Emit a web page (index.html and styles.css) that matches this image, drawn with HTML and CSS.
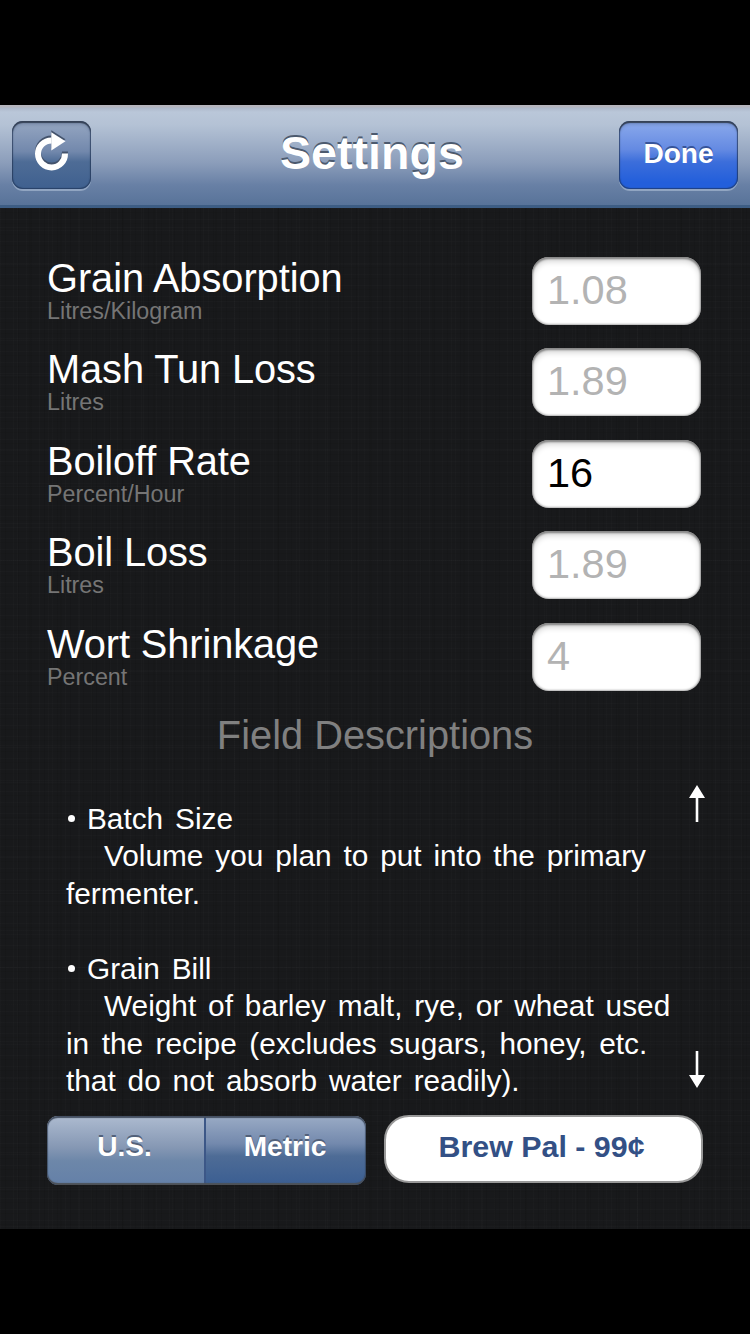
FILE: index.html
```html
<!DOCTYPE html>
<html lang="en">
<head>
<meta charset="utf-8">
<title>Settings</title>
<link rel="stylesheet" href="styles.css">
</head>
<body>
<div class="app">
  <header class="navbar">
    <button class="nav-button refresh" aria-label="Refresh">
      <svg class="refresh-icon" viewBox="0 0 36 44" width="36" height="44">
        <path d="M31 25.5A13.5 13.5 0 1 1 17.5 12.4" fill="none" stroke="currentColor" stroke-width="6"/>
        <path d="M17.3 4.2L31.5 13.2L17.3 22.6Z" fill="currentColor"/>
      </svg>
    </button>
    <h1 class="title">Settings</h1>
    <button class="nav-button done">Done</button>
  </header>
  <main class="content">
    <div class="fields">
      <div class="row"><label class="caption"><span class="name grain">Grain Absorption</span><span class="unit">Litres/Kilogram</span></label><input class="field" placeholder="1.08"></div>
      <div class="row"><label class="caption"><span class="name">Mash Tun Loss</span><span class="unit">Litres</span></label><input class="field" placeholder="1.89"></div>
      <div class="row"><label class="caption"><span class="name">Boiloff Rate</span><span class="unit">Percent/Hour</span></label><input class="field" value="16"></div>
      <div class="row"><label class="caption"><span class="name">Boil Loss</span><span class="unit">Litres</span></label><input class="field" placeholder="1.89"></div>
      <div class="row"><label class="caption"><span class="name">Wort Shrinkage</span><span class="unit">Percent</span></label><input class="field" placeholder="4"></div>
    </div>
    <h2 class="subtitle">Field Descriptions</h2>
    <section class="descriptions">
      <div class="text">
        <p class="term">Batch Size</p>
        <p class="body">Volume you plan to put into the primary</p>
        <p class="line">fermenter.</p>
        <p class="term second">Grain Bill</p>
        <p class="body">Weight of barley malt, rye, or wheat used</p>
        <p class="line wide">in the recipe (excludes sugars, honey, etc.</p>
        <p class="line">that do not absorb water readily).</p>
      </div>
      <div class="scroll-hints">
        <svg width="16" height="37" viewBox="0 0 16 37"><path d="M8 0L16 13H9.3V37H6.7V13H0Z" fill="currentColor"/></svg>
        <svg width="16" height="37" viewBox="0 0 16 37"><path d="M8 37L0 24H6.7V0H9.3V24H16Z" fill="currentColor"/></svg>
      </div>
    </section>
    <footer class="actions">
      <div class="segments"><button class="segment us">U.S.</button><button class="segment metric">Metric</button></div>
      <button class="purchase">Brew Pal - 99¢</button>
    </footer>
  </main>
</div>
</body>
</html>
```
FILE: styles.css
```css
* { box-sizing: border-box; }
body {
  margin: 0;
  background: #000;
  color: #fff;
  font-family: "Liberation Sans", Arial, sans-serif;
}
button, input { font-family: inherit; margin: 0; border: 0; }
h1, h2, p { margin: 0; font-weight: normal; }
.app { width: 750px; height: 1334px; padding: 105px 0; display: flex; flex-direction: column; overflow: hidden; }

.navbar {
  height: 103px;
  flex: none;
  display: flex;
  align-items: flex-start;
  justify-content: space-between;
  padding: 16px 12px 0;
  border-bottom: 3px solid #3d5d84;
  background: linear-gradient(#b5b5bd 0, #b5b5bd 2px, #adb9ca 3px, #bac7d9 7px, #b4c2d5 20px, #8b9dba 58px, #6880a5 80px, #587399 100px);
}
.nav-button {
  height: 68px;
  padding: 0;
  display: flex;
  justify-content: center;
  border-radius: 11px;
  color: #fff;
  box-shadow: inset 0 2px 1px #364257, inset 0 0 1px 1px rgba(28,47,82,.65), inset 0 4px 3px rgba(40,60,95,.2), 0 2px 0 rgba(190,205,225,.5);
}
.refresh { width: 79px; background: linear-gradient(#96a7c2, #7288ac 45%, #4e6c96 60%, #3f608f); }
.refresh-icon { margin-top: 7px; filter: drop-shadow(0 -2px 0 #43526b); }
.title {
  width: 184px;
  margin: -2px 0 0 34px;
  font-size: 46.6px;
  line-height: 68px;
  font-weight: bold;
  text-shadow: 0 -2px 0 #4c5a6e;
}
.done {
  width: 119px;
  font-size: 28.1px;
  line-height: 66px;
  font-weight: bold;
  text-shadow: 0 -2px 0 #36549a;
  background: linear-gradient(#8caaec, #648ae2 42%, #3c6edb 60%, #235fdb 90%);
}

.content {
  height: 1021px;
  padding: 49px 47px 0;
  background:
    repeating-linear-gradient(90deg, rgba(255,255,255,.01) 0 1px, transparent 1px 5px, rgba(0,0,0,.07) 5px 6px, transparent 6px 13px),
    repeating-linear-gradient(90deg, transparent 0 17px, rgba(255,255,255,.01) 17px 18px, transparent 18px 29px, rgba(0,0,0,.06) 29px 31px),
    repeating-linear-gradient(rgba(255,255,255,.01) 0 1px, transparent 1px 4px, rgba(0,0,0,.06) 4px 5px, transparent 5px 11px),
    repeating-linear-gradient(transparent 0 19px, rgba(255,255,255,.01) 19px 20px, transparent 20px 37px),
    #18191b;
}
.row { height: 91.4px; display: flex; justify-content: space-between; padding-right: 2px; }
.caption { display: flex; flex-direction: column; margin-top: -1px; white-space: nowrap; }
.name { font-size: 39.8px; line-height: 44px; letter-spacing: -.1px; }
.grain { letter-spacing: -.05px; }
.unit { color: #757575; font-size: 23.3px; line-height: 22px; }
.field {
  width: 169px;
  height: 68px;
  padding: 0 14px 2px 15px;
  border-radius: 17px;
  background: #fff;
  color: #000;
  font-size: 41.5px;
  box-shadow: inset 0 2px 2px #888, inset 0 4px 6px rgba(0,0,0,.2), inset 0 0 2px 1px rgba(0,0,0,.3);
}
.field::placeholder { color: #b3b3b3; opacity: 1; }
.subtitle { height: 46px; text-align: center; color: #808080; font-size: 39.8px; line-height: 43px; }

.descriptions { height: 336px; padding: 40px 2px 0 19px; display: flex; justify-content: space-between; }
.text { font-size: 29.8px; line-height: 37.5px; word-spacing: 3.6px; white-space: nowrap; }
.term { display: flex; align-items: center; gap: 12px; padding-left: 2px; }
.term::before { content: ""; width: 7px; height: 7px; border-radius: 50%; background: #fff; }
.second { margin-top: 37.5px; }
.body { padding-left: 38px; }
.wide { word-spacing: 4.2px; }
.scroll-hints { margin: -15px -4px 0 0; height: 303px; display: flex; flex-direction: column; justify-content: space-between; }

.actions { margin-top: 20px; display: flex; gap: 18px; }
.segments {
  position: relative;
  width: 319px;
  height: 69px;
  display: flex;
  border-radius: 11px;
  overflow: hidden;
}
.segments::after {
  content: "";
  position: absolute;
  inset: 0;
  border-radius: 11px;
  pointer-events: none;
  box-shadow: inset 0 2px 1px #455062, inset 0 -2px 1px #4d5157, inset 0 0 1px 1px rgba(40,55,80,.6);
}
.segment { height: 69px; padding: 0 0 7px; color: #fff; font-size: 28.1px; font-weight: bold; text-shadow: 0 -2px 0 #52617a; }
.us { width: 157px; padding-right: 2px; background: linear-gradient(#adbbd0, #8698b4 45%, #6d87a9 65%, #6480a8); }
.metric { width: 162px; padding-right: 2px; border-left: 2px solid #3c5787; background: linear-gradient(#9aabc5, #7389ad 40%, #4e6c96 58%, #3b5e92); }
.purchase {
  width: 319px;
  height: 68px;
  margin-top: -1px;
  padding: 0 4px 4px 0;
  border: 2px solid #999;
  border-radius: 25px;
  background: #fff;
  color: #335085;
  font-size: 30.4px;
  font-weight: bold;
  white-space: nowrap;
}
```
